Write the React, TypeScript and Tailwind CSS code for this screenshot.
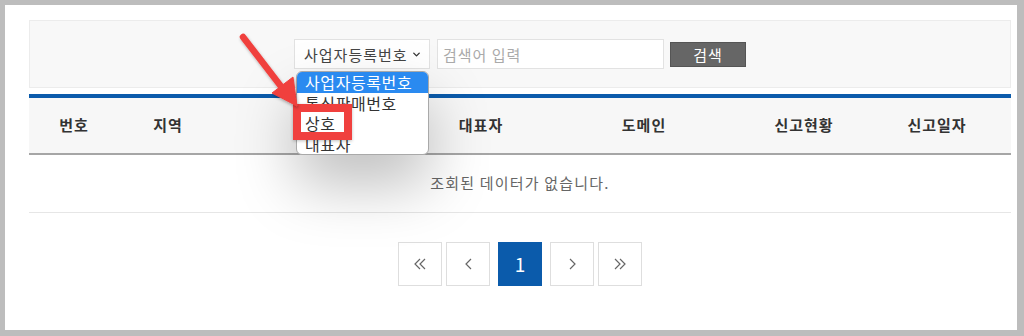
import { ChevronDown } from 'lucide-react'

const cols = ['번호', '지역', '상호', '대표자', '도메인', '신고현황', '신고일자']
const options = ['사업자등록번호', '통신판매번호', '상호', '대표자']

function Chev({ dir, double }: { dir: 'left' | 'right'; double?: boolean }) {
  const d = dir === 'left' ? 'M6 1 L1 6 L6 11' : 'M1 1 L6 6 L1 11'
  return (
    <svg width={double ? 13 : 7} height="12" viewBox={double ? '0 0 13 12' : '0 0 7 12'} fill="none" stroke="#666" strokeWidth="1.2">
      <path d={d} />
      {double && <path d={d} transform="translate(5 0)" />}
    </svg>
  )
}

export default function App() {
  return (
    <div
      className="relative w-[1024px] h-[336px] bg-white border-l-[5px] border-t-[5px] border-r-[7px] border-b-[6px] border-[#bdbdbd] pl-[24px] pr-[6px] pt-[15px] overflow-hidden"
      style={{ fontFamily: '"Noto Sans CJK KR", "Noto Sans", sans-serif' }}
    >
      {/* 검색 */}
      <div className="h-[68px] bg-[#f8f8f8] border border-[#ececec] flex items-center justify-center">
        <div className="relative">
          <div className="w-[136px] h-[30px] bg-white border border-[#e2e2e2] flex items-center justify-between pl-[9px] pr-[7px] text-[15px] tracking-[1px] text-[#444] leading-none">
            <span>사업자등록번호</span>
            <ChevronDown className="w-[11px] h-[11px] text-[#333]" strokeWidth={3} />
          </div>

          {/* 드롭다운 */}
          <div className="absolute left-[2px] top-[32px] w-[133px] h-[84px] z-10 bg-white border border-[#a9a9a9] rounded-[6px] overflow-hidden shadow-[0_30px_60px_rgba(0,0,0,0.25)]">
            {options.map((o, i) => (
              <div
                key={o}
                className={`h-[20.5px] pl-[8px] text-[16px] tracking-[0.6px] leading-[20px] ${i === 0 ? 'bg-[#2a8af0] text-white' : 'text-[#333]'}`}
              >
                {o}
              </div>
            ))}
          </div>
          <div className="absolute left-[-1px] top-[65px] w-[59px] h-[36px] z-20 border-[8px] border-[#f0403e] shadow-[0_1px_3px_rgba(0,0,0,0.25)]" />
        </div>
        <div className="ml-[7px] w-[227px] h-[30px] bg-white border border-[#e2e2e2] flex items-center pl-[5px] text-[15px] tracking-[1px] text-[#aaa] leading-none">
          검색어 입력
        </div>
        <button className="ml-[6px] w-[76px] h-[25px] bg-[#666] border border-[#555] text-white text-[15px] tracking-[1px] leading-none">
          검색
        </button>
      </div>

      {/* 목록 */}
      <div className="mt-[6px] border-t-[4px] border-[#0b5bab]">
        <div className="h-[57px] bg-[#f7f7f7] border-b-[2px] border-[#a6a6a6] grid grid-cols-[90px_98px_183px_162px_164px_156px_1fr] items-center text-[15px] tracking-[1px] font-bold text-[#333]">
          {cols.map((c, i) => (
            <div key={c} className={`text-center ${i === 6 ? 'pr-[19px]' : ''}`}>
              {c}
            </div>
          ))}
        </div>
        <div className="h-[58px] border-b border-[#e6e6e6] flex items-center justify-center text-[15px] tracking-[1.2px] text-[#666]">
          조회된 데이터가 없습니다.
        </div>
      </div>

      {/* 페이지 */}
      <div className="mt-[29px] flex justify-center gap-[4px]">
        <div className="w-[44px] h-[44px] border border-[#dedede] flex items-center justify-center"><Chev dir="left" double /></div>
        <div className="w-[44px] h-[44px] border border-[#dedede] flex items-center justify-center"><Chev dir="left" /></div>
        <div className="mx-[4px] w-[44px] h-[44px] bg-[#0b5bab] flex items-center justify-center text-white text-[19px]">1</div>
        <div className="w-[44px] h-[44px] border border-[#dedede] flex items-center justify-center"><Chev dir="right" /></div>
        <div className="w-[44px] h-[44px] border border-[#dedede] flex items-center justify-center"><Chev dir="right" double /></div>
      </div>

      {/* 화살표 */}
      <svg className="absolute left-[-5px] top-[-5px] z-30 pointer-events-none" width="1024" height="336" viewBox="0 0 1024 336">
        <defs>
          <filter id="sh" x="-20%" y="-20%" width="140%" height="140%">
            <feDropShadow dx="1" dy="2" stdDeviation="1.5" floodColor="#000" floodOpacity="0.3" />
          </filter>
        </defs>
        <g filter="url(#sh)" fill="#f0403e" stroke="#f0403e">
          <line x1="243" y1="37" x2="283" y2="89" strokeWidth="6.5" strokeLinecap="round" />
          <polygon points="297,106 293,77 272,93" strokeWidth="1" strokeLinejoin="round" />
        </g>
      </svg>
    </div>
  )
}
